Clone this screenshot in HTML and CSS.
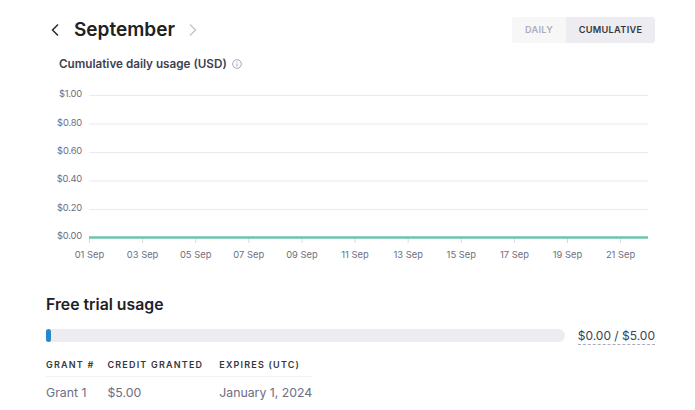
FILE: index.html
```html
<!DOCTYPE html>
<html lang="en">
<head>
<meta charset="utf-8">
<title>Usage</title>
<link rel="stylesheet" href="styles.css">
</head>
<body>
<main class="page">
  <header class="topbar">
    <div class="month-nav">
      <svg class="chev" viewBox="0 0 10 16" width="10" height="16"><path d="M8 2.5 2.5 8 8 13.5" fill="none" stroke="#202123" stroke-width="1.4"/></svg>
      <h1 class="month">September</h1>
      <svg class="chev chev-off" viewBox="0 0 10 16" width="10" height="16"><path d="M2 2.5 7.5 8 2 13.5" fill="none" stroke="#c5c5d2" stroke-width="1.4"/></svg>
    </div>
    <div class="toggle">
      <span class="seg seg-daily">DAILY</span>
      <span class="seg seg-on">CUMULATIVE</span>
    </div>
  </header>
  <div class="chart-title">
    <span>Cumulative daily usage (USD)</span>
    <svg viewBox="0 0 10 10" width="10" height="10"><circle cx="5" cy="5" r="4.3" fill="none" stroke="#8e8ea0" stroke-width=".8"/><path d="M5 4.4v3M5 2.4v1" stroke="#8e8ea0" stroke-width=".8"/></svg>
  </div>
  <svg class="chart" width="695" height="194" viewBox="0 72 695 194">
    <g class="grid">
      <path d="M89 95.5H648M89 124H648M89 152.5H648M89 181H648M89 209.5H648"/>
    </g>
    <g class="ylabels">
      <text x="82" y="97">$1.00</text>
      <text x="82" y="126">$0.80</text>
      <text x="82" y="154">$0.60</text>
      <text x="82" y="182">$0.40</text>
      <text x="82" y="211">$0.20</text>
      <text x="82" y="239">$0.00</text>
    </g>
    <path class="ticks" d="M89.5 238v5M142.6 238v5M195.7 238v5M248.8 238v5M302 238v5M355 238v5M408.2 238v5M461.3 238v5M514.4 238v5M567.5 238v5M620.6 238v5"/>
    <path class="line" d="M89 237.6H648"/>
    <g class="xlabels">
      <text x="89.5" y="258">01 Sep</text>
      <text x="142.6" y="258">03 Sep</text>
      <text x="195.7" y="258">05 Sep</text>
      <text x="248.8" y="258">07 Sep</text>
      <text x="302" y="258">09 Sep</text>
      <text x="355" y="258">11 Sep</text>
      <text x="408.2" y="258">13 Sep</text>
      <text x="461.3" y="258">15 Sep</text>
      <text x="514.4" y="258">17 Sep</text>
      <text x="567.5" y="258">19 Sep</text>
      <text x="620.6" y="258">21 Sep</text>
    </g>
  </svg>
  <section class="trial">
    <h2 class="trial-title">Free trial usage</h2>
    <div class="progress-row">
      <div class="track"><div class="fill"></div></div>
      <span class="amount">$0.00 / $5.00</span>
    </div>
    <table class="grants">
      <thead>
        <tr><th>GRANT #</th><th>CREDIT GRANTED</th><th>EXPIRES (UTC)</th></tr>
      </thead>
      <tbody>
        <tr><td>Grant 1</td><td>$5.00</td><td>January 1, 2024</td></tr>
      </tbody>
    </table>
  </section>
</main>
</body>
</html>
```
FILE: styles.css
```css
* { box-sizing: border-box; }
html, body { margin: 0; height: 100%; overflow: hidden; background: #fff; }
body { font-family: Inter, "Liberation Sans", sans-serif; color: #202123; }
.page { width: 695px; height: 410px; overflow: hidden; }
.topbar { display: flex; justify-content: space-between; align-items: center; padding: 17px 40px 0 50px; height: 43px; }
.month-nav { display: flex; align-items: center; }
.chev { display: block; }
.month { margin: 0 13px 0 14px; font-size: 19px; font-weight: 600; line-height: 26px; color: #202123; }
.toggle { display: flex; height: 26px; border-radius: 3px; overflow: hidden; background: #f7f7f8; font-size: 9.2px; font-weight: 600; letter-spacing: .3px; line-height: 26px; }
.seg { padding: 0 13px; color: #acacbe; }
.seg-daily { width: 54px; text-align: center; padding: 0; }
.seg-on { background: #ececf1; color: #353740; width: 89px; text-align: center; padding: 0; }
.chart-title { display: flex; align-items: center; gap: 5px; padding: 0 0 0 59px; margin-top: 13px; height: 16px; font-size: 11.7px; font-weight: 600; color: #40414f; }
.chart { display: block; }
.grid path { stroke: #e9e9ee; stroke-width: 1; fill: none; }
.ticks { stroke: #d9d9e3; stroke-width: 1; fill: none; }
.line { stroke: #6cc5ae; stroke-width: 2.5; fill: none; }
.ylabels text { font-size: 9.4px; letter-spacing: -.2px; fill: #6e6e80; text-anchor: end; }
.xlabels text { font-size: 9.4px; fill: #6e6e80; text-anchor: middle; }
.trial { padding: 0 40px 0 46px; margin-top: 29px; }
.trial-title { margin: 0; font-size: 15.8px; font-weight: 600; line-height: 20px; color: #202123; }
.progress-row { display: flex; align-items: center; justify-content: space-between; margin-top: 13px; }
.track { width: 519px; height: 13px; border-radius: 7px; background: #ececf1; position: relative; top: -1px; }
.fill { width: 5px; height: 13px; border-radius: 3px; background: #2488d0; }
.amount { font-size: 12px; font-weight: 400; line-height: 15px; color: #40414f; border-bottom: 1px dashed #acacbe; padding-bottom: 1px; }
.grants { border-collapse: collapse; margin-top: 9px; }
.grants th { font-size: 9px; font-weight: 600; letter-spacing: 1.2px; text-align: left; padding: 0 16px 0 0; height: 22px; color: #353740; border-bottom: 1px solid #f2f2f5; white-space: nowrap; }
.grants td { font-size: 12.3px; color: #6e6e80; padding: 0 16px 0 0; height: 32px; white-space: nowrap; }
.grants th:first-child, .grants td:first-child { padding-right: 13px; }
.grants th:last-child, .grants td:last-child { padding-right: 0; }
```
